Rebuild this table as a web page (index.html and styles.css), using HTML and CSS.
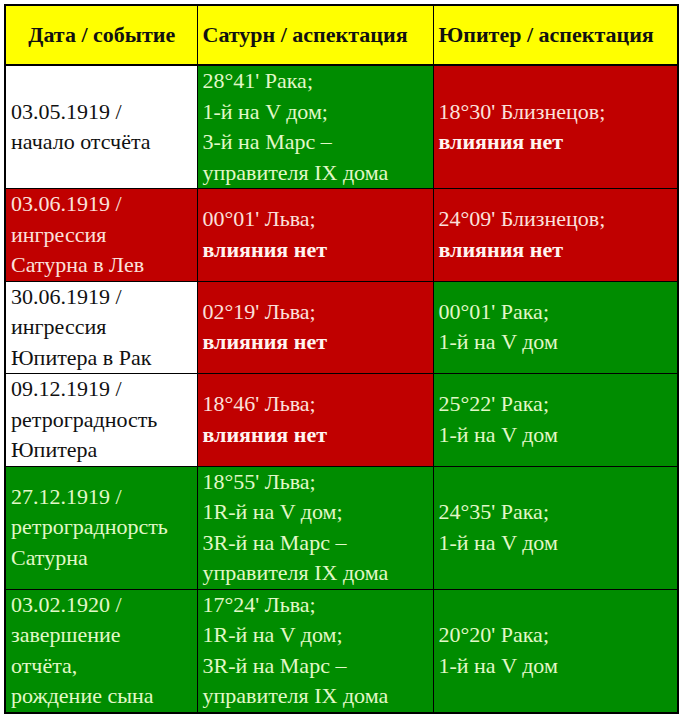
FILE: index.html
```html
<!DOCTYPE html>
<html>
<head>
<meta charset="utf-8">
<link rel="stylesheet" href="styles.css">
</head>
<body class="page">
<table class="tbl">
  <colgroup>
    <col class="c1"><col class="c2"><col class="c3">
  </colgroup>
  <tr>
    <th class="hc hc1">Дата / событие</th>
    <th class="hc">Сатурн / аспектация</th>
    <th class="hc">Юпитер / аспектация</th>
  </tr>
  <tr>
    <td class="cell w">03.05.1919 /<br>начало отсчёта</td>
    <td class="cell g">28°41' Рака;<br>1-й на V дом;<br>3-й на Марс –<br>управителя IX дома</td>
    <td class="cell r">18°30' Близнецов;<br><span class="bold">влияния нет</span></td>
  </tr>
  <tr>
    <td class="cell r">03.06.1919 /<br>ингрессия<br>Сатурна в Лев</td>
    <td class="cell r">00°01' Льва;<br><span class="bold">влияния нет</span></td>
    <td class="cell r">24°09' Близнецов;<br><span class="bold">влияния нет</span></td>
  </tr>
  <tr>
    <td class="cell w">30.06.1919 /<br>ингрессия<br>Юпитера в Рак</td>
    <td class="cell r">02°19' Льва;<br><span class="bold">влияния нет</span></td>
    <td class="cell g">00°01' Рака;<br>1-й на V дом</td>
  </tr>
  <tr>
    <td class="cell w">09.12.1919 /<br>ретроградность<br>Юпитера</td>
    <td class="cell r">18°46' Льва;<br><span class="bold">влияния нет</span></td>
    <td class="cell g">25°22' Рака;<br>1-й на V дом</td>
  </tr>
  <tr>
    <td class="cell g">27.12.1919 /<br>ретрограднорсть<br>Сатурна</td>
    <td class="cell g">18°55' Льва;<br>1R-й на V дом;<br>3R-й на Марс –<br>управителя IX дома</td>
    <td class="cell g">24°35' Рака;<br>1-й на V дом</td>
  </tr>
  <tr>
    <td class="cell g">03.02.1920 /<br>завершение<br>отчёта,<br>рождение сына</td>
    <td class="cell g">17°24' Льва;<br>1R-й на V дом;<br>3R-й на Марс –<br>управителя IX дома</td>
    <td class="cell g">20°20' Рака;<br>1-й на V дом</td>
  </tr>
</table>
</body>
</html>
```
FILE: styles.css
```css
.page {
  margin: 0;
  padding: 4px 0 0 4px;
  background: #ffffff;
  font: 22px/30.5px "Liberation Serif", serif;
}
.tbl {
  border-collapse: collapse;
  table-layout: fixed;
  width: 673px;
  border: 2px solid #000;
  font: 22px/30.5px "Liberation Serif", serif;
}
.c1 { width: 192px; }
.c2 { width: 236px; }
.c3 { width: 245px; }
.hc, .cell {
  font: 22px/30.5px "Liberation Serif", serif;
  border: 1px solid #000;
  padding: 0 4px 0 5px;
  vertical-align: middle;
  text-align: left;
}
.hc {
  font: bold 22px/30.5px "Liberation Serif", serif;
  background: #ffff00;
  color: #111;
  height: 58px;
  border-bottom: 2px solid #000;
}
.hc1 {
  text-align: center;
}
.w {
  background: #ffffff;
  color: #111;
}
.g {
  background: #008c00;
  color: #e2f8c8;
}
.r {
  background: #c00000;
  color: #fbe0dc;
}
.bold {
  font: bold 22px/30.5px "Liberation Serif", serif;
  color: #fff4f0;
}
```
